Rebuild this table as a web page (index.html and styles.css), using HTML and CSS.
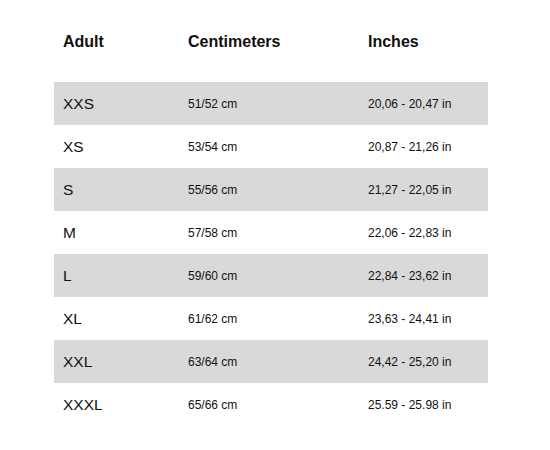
FILE: index.html
```html
<!DOCTYPE html>
<html>
<head>
<meta charset="utf-8">
<link rel="stylesheet" href="styles.css">
</head>
<body>
<div class="chart">
  <div class="head">
    <div>Adult</div>
    <div>Centimeters</div>
    <div>Inches</div>
  </div>
  <div class="row alt"><div class="size">XXS</div><div class="val">51/52 cm</div><div class="val">20,06 - 20,47 in</div></div>
  <div class="row"><div class="size">XS</div><div class="val">53/54 cm</div><div class="val">20,87 - 21,26 in</div></div>
  <div class="row alt"><div class="size">S</div><div class="val">55/56 cm</div><div class="val">21,27 - 22,05 in</div></div>
  <div class="row"><div class="size">M</div><div class="val">57/58 cm</div><div class="val">22,06 - 22,83 in</div></div>
  <div class="row alt"><div class="size">L</div><div class="val">59/60 cm</div><div class="val">22,84 - 23,62 in</div></div>
  <div class="row"><div class="size">XL</div><div class="val">61/62 cm</div><div class="val">23,63 - 24,41 in</div></div>
  <div class="row alt"><div class="size">XXL</div><div class="val">63/64 cm</div><div class="val">24,42 - 25,20 in</div></div>
  <div class="row"><div class="size">XXXL</div><div class="val">65/66 cm</div><div class="val">25.59 - 25.98 in</div></div>
</div>
</body>
</html>
```
FILE: styles.css
```css
html, body {
  margin: 0;
  padding: 0;
  background: #fff;
}
body {
  font-family: "Liberation Sans", Arial, Helvetica, sans-serif;
  color: #111;
  width: 550px;
  height: 450px;
}
.chart {
  margin-left: 54px;
  width: 434px;
}
.head, .row {
  display: grid;
  grid-template-columns: 125px 180px 1fr;
  padding-left: 9px;
}
.head {
  height: 82px;
  box-sizing: border-box;
  padding-top: 33px;
  font-weight: bold;
  font-size: 16px;
}
.row {
  height: 43px;
  align-items: center;
}
.row.alt {
  background: #d9d9d9;
}
.size {
  font-size: 15.5px;
}
.val {
  font-size: 12px;
}
```
